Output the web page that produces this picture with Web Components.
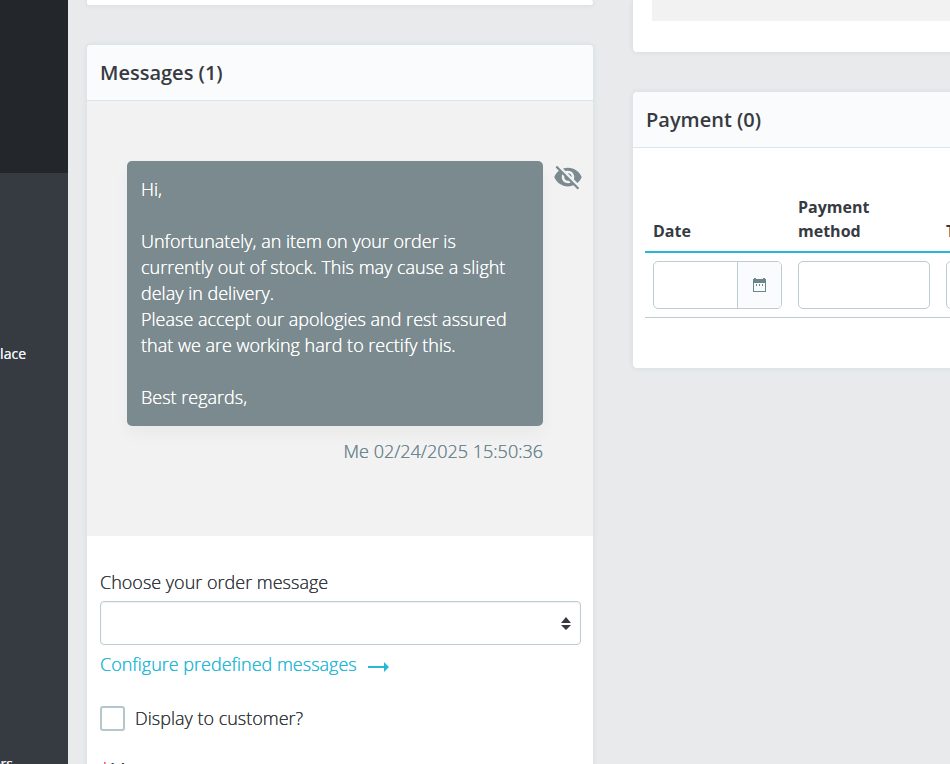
<!DOCTYPE html>
<html lang="en">
<head>
<meta charset="utf-8">
<title>Order</title>
<style>
html, body { margin: 0; min-height: 100%; }
body { font-family: "Open Sans", "Noto Sans", sans-serif; font-size: 18px; font-weight: 300; text-shadow: 0 0 0 currentColor; line-height: 26px; color: #363a41; background: #e9eaec; }
</style>
</head>
<body>
<order-page></order-page>
<script>
function define(name, html) {
  const template = document.createElement('template');
  template.innerHTML = html;
  customElements.define(name, class extends HTMLElement {
    constructor() {
      super();
      this.attachShadow({ mode: 'open' }).append(template.content.cloneNode(true));
    }
  });
}

define('side-nav', `
<style>
:host { display: flex; flex-direction: column; background: #363a41; color: #fff; font-size: 14px; font-weight: 400; line-height: 20px; overflow: hidden; }
.section { height: 173px; background: #23262b; flex: none; }
nav { display: flex; flex-direction: column; align-items: flex-end; gap: 390px; padding: 171px 42px 0 0; }
nav a + a { margin-right: 13px; }
a { color: #eef0f2; text-decoration: none; white-space: nowrap; }
</style>
<div class="section"></div>
<nav><a href="#">Marketplace</a><a href="#">Parameters</a></nav>`);

define('ui-panel', `
<style>
:host { display: block; background: #fff; border: 1px solid #dbe6e9; border-radius: 5px; box-shadow: 0 0 5px 0 rgba(0,0,0,.06); overflow: hidden; }
header { padding: 15px 13px 14px; background: #fafbfd; border-bottom: 1px solid #dbe6e9; }
h3 { margin: 0; font-size: 20px; line-height: 26px; font-weight: 600; text-shadow: none; }
:host([bare]) header { display: none; }
</style>
<header><h3><slot name="title"></slot></h3></header>
<slot></slot>`);

define('icon-hidden', `
<style>:host { display: block; } svg { display: block; width: 30px; height: 30px; fill: #7b8a8e; }</style>
<svg viewBox="0 0 24 24" aria-hidden="true"><path d="M12 7c2.76 0 5 2.24 5 5 0 .65-.13 1.26-.36 1.83l2.92 2.92c1.51-1.26 2.7-2.89 3.43-4.75-1.73-4.39-6-7.5-11-7.5-1.4 0-2.74.25-3.98.7l2.16 2.16C10.74 7.13 11.35 7 12 7zM2 4.27l2.28 2.28.46.46C3.08 8.3 1.78 10.02 1 12c1.73 4.39 6 7.5 11 7.5 1.55 0 3.03-.3 4.38-.84l.42.42L19.73 22 21 20.73 3.27 3 2 4.27zM7.53 9.8l1.55 1.55c-.05.21-.08.43-.08.65 0 1.66 1.34 3 3 3 .22 0 .44-.03.65-.08l1.55 1.55c-.67.33-1.41.53-2.2.53-2.76 0-5-2.24-5-5 0-.79.2-1.53.53-2.2zm4.31-.78l3.15 3.15.02-.16c0-1.66-1.34-3-3-3l-.17.01z"/></svg>`);

define('message-item', `
<style>
:host { display: grid; grid-template-columns: minmax(0, 1fr) 50px; padding: 60px 0 72px 40px; background: #f2f2f2; }
.bubble { padding: 15px 14px 16px; border-radius: 5px; background: #7b8a8e; color: #fff; white-space: pre-line; box-shadow: 0 8px 16px 0 rgba(0,0,0,.04); }
icon-hidden { padding: 1px 0 0 10px; }
.meta { margin-top: 12px; text-align: right; color: #6c868e; }
</style>
<div class="bubble"><slot></slot></div>
<icon-hidden></icon-hidden>
<div class="meta"><slot name="meta"></slot></div>`);

define('message-form', `
<style>
:host { display: block; padding: 33px 12px 40px 13px; }
form { display: flex; flex-direction: column; }
.pick { position: relative; display: grid; margin: 6px 0; }
select { appearance: none; width: 100%; height: 44px; border: 1px solid #bbcdd2; border-radius: 4px; background: #fff; font: inherit; color: inherit; padding: 0 32px 0 12px; box-shadow: inset 0 1px 2px rgba(0,0,0,.06); }
.pick svg { position: absolute; right: 9px; top: 16px; width: 12px; height: 13px; fill: #363a41; pointer-events: none; }
a { display: flex; align-items: center; gap: 11px; color: #25b9d7; text-decoration: none; align-self: flex-start; }
a svg { width: 22px; height: 12px; fill: currentColor; margin-top: 6px; }
.check { display: flex; align-items: center; gap: 10px; margin: 28px 0 25px; }
input { appearance: none; flex: none; margin: 0; width: 25px; height: 25px; border: 2px solid #b3c7cd; border-radius: 3px; background: #fff; }
.req { color: #f54c3e; }
</style>
<form>
  <label for="preset">Choose your order message</label>
  <div class="pick"><select id="preset"><option></option></select>
    <svg viewBox="0 0 12 13" aria-hidden="true"><path d="M1 6 6 0l5 6zM1 8h10l-5 5z"/></svg></div>
  <a href="#">Configure predefined messages<svg viewBox="0 0 22 12" aria-hidden="true"><path d="M0 5h16V1l5 5-5 5V7H0z"/></svg></a>
  <div class="check"><input type="checkbox" id="show"><label for="show">Display to customer?</label></div>
  <div><span class="req">*</span>Message</div>
</form>`);

define('payment-table', `
<style>
:host { display: block; padding: 39px 12px 50px; text-shadow: none; }
table { width: 100%; border-collapse: separate; border-spacing: 0; table-layout: fixed; }
.c1 { width: 145px; } .c2 { width: 148px; }
th { padding: 8px; text-align: left; vertical-align: bottom; font-size: 16px; line-height: 24px; font-weight: 700; border-bottom: 2px solid #25b9d7; }
td { padding: 8px; border-bottom: 1px solid #bbcdd2; }
.field { display: flex; height: 46px; border: 1px solid #bbcdd2; border-radius: 5px; overflow: hidden; background: #fff; }
input { flex: 1; min-width: 0; border: 0; padding: 0 8px; font: inherit; background: none; }
button { flex: none; width: 44px; border: 0; border-left: 1px solid #bbcdd2; padding: 0; background: #fafbfc; display: grid; place-items: center; }
svg { width: 15px; height: 15px; fill: #6c868e; }
</style>
<table>
  <colgroup><col class="c1"><col class="c2"><col></colgroup>
  <thead><tr><th>Date</th><th>Payment method</th><th>Transaction ID</th></tr></thead>
  <tbody><tr>
    <td><div class="field"><input aria-label="Date"><button type="button" aria-label="Pick a date">
      <svg viewBox="0 0 15 15"><path d="M1 1h1V0h2v1h7V0h2v1h1v13H1zM2 5v8h11V5zM4 6h1v2H4zM7 6h1v2H7zM10 6h1v2h-1z" fill-rule="evenodd"/></svg></button></div></td>
    <td><div class="field"><input aria-label="Payment method"></div></td>
    <td><div class="field"><input aria-label="Transaction ID"></div></td>
  </tr></tbody>
</table>`);

define('order-page', `
<style>
:host { display: grid; grid-template-columns: 68px minmax(0, 1fr); height: 100vh; overflow: hidden; }
main { display: grid; grid-template-columns: minmax(0, 1fr) 318px; gap: 38px; padding-left: 18px; overflow: hidden; align-items: start; }
.col { display: flex; flex-direction: column; gap: 38px; }
.right { min-width: 460px; }
.end { height: 5px; }
.summary { padding: 0 19px 31px; }
.summary div { height: 21px; background: #f2f2f2; }
.top { border-top: 0; border-top-left-radius: 0; }
</style>
<side-nav></side-nav>
<main>
  <div class="col">
    <ui-panel bare class="top"><div class="end"></div></ui-panel>
    <ui-panel><span slot="title">Messages (1)</span>
      <message-item>Hi,<br><br>Unfortunately, an item on your order is currently out of stock. This may cause a slight delay in delivery.<br>Please accept our apologies and rest assured that we are working hard to rectify this.<br><br>Best regards,<span slot="meta">Me 02/24/2025 15:50:36</span></message-item>
      <message-form></message-form>
    </ui-panel>
  </div>
  <div class="col right">
    <ui-panel bare class="top"><div class="summary"><div></div></div></ui-panel>
    <ui-panel><span slot="title">Payment (0)</span><payment-table></payment-table></ui-panel>
  </div>
</main>`);
</script>
</body>
</html>
